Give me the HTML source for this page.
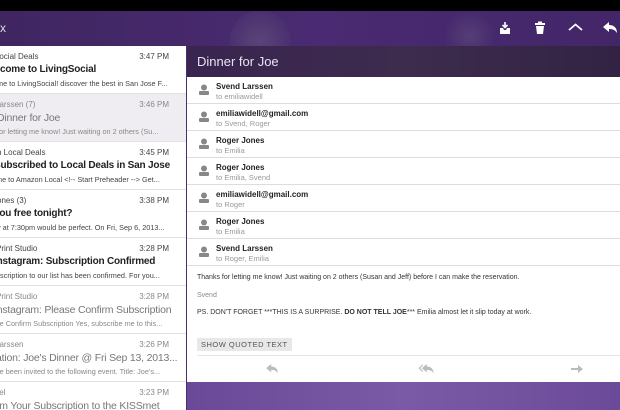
<!DOCTYPE html>
<html><head><style>
*{margin:0;padding:0;box-sizing:border-box}
body{width:620px;height:410px;overflow:hidden;font-family:"Liberation Sans",sans-serif;background:#4a2d6e;position:relative}
.top{position:absolute;left:0;top:0;width:620px;height:11px;background:#000}
.hdr{position:absolute;left:0;top:11px;width:620px;height:35px;background:radial-gradient(circle at 260px 30px,#5a4478 0,#4b3070 30px,transparent 31px),radial-gradient(circle at 470px 25px,#553f76 0,transparent 26px),linear-gradient(90deg,#3f2660,#4a2a72 50%,#432668)}
.hdr .x{position:absolute;left:0;top:10px;color:#ddd;font-size:12px}
.list{position:absolute;left:0;top:46px;width:186px;height:364px;background:#fff;overflow:hidden}
.row{position:absolute;left:0;width:186px;height:48px;border-bottom:1px solid #e2e2e2;white-space:nowrap;overflow:hidden}
.row.sel{background:#efedf2}
.row .s{position:absolute;top:6px;font-size:8px;color:#444}
.row .t{position:absolute;right:17px;top:6px;font-size:8px;color:#444}
.row .j{position:absolute;top:18px;font-size:10px;letter-spacing:-0.2px;font-weight:bold;color:#222}
.row .p{position:absolute;top:33px;font-size:7.3px;color:#444}
.row.sel .s,.row.sel .t,.row.sel .p,.row.g .s,.row.g .t,.row.g .p{color:#888}
.row.sel .j,.row.g .j{color:#777;font-weight:normal;font-size:10.5px}
.right{position:absolute;left:187px;top:46px;width:433px;height:336px;background:#fff}
.title{position:absolute;left:0;top:0;width:433px;height:31px;background:linear-gradient(90deg,#3a2450,#3d2c4e 50%,#322244);color:#e8e4ee;font-size:13px;padding:8px 0 0 10px}
.rc{position:absolute;left:0;width:433px;height:27px;border-bottom:1px solid #ddd}
.rc .ic{position:absolute;left:12px;top:7px;width:10px;height:11px}
.rc .n{position:absolute;left:29px;top:5px;font-size:8px;font-weight:bold;color:#222}
.rc .to{position:absolute;left:29px;top:15px;font-size:7.5px;color:#999}
.body{position:absolute;left:10px;font-size:7px;color:#333;white-space:nowrap}
.btn{position:absolute;left:10px;top:292px;background:#e8e8e8;color:#555;font-size:7.5px;padding:2px 4px;letter-spacing:.5px}
.foot{position:absolute;left:187px;top:382px;width:433px;height:28px;background:linear-gradient(90deg,#6a4a98,#7a5aa6 50%,#6c4a9a)}
</style></head><body>
<div class="top"></div>
<div class="hdr"><span class="x">x</span>
<svg style="position:absolute;left:499px;top:10px" width="12" height="14" viewBox="0 0 12 14"><path d="M6 1v5M3.5 4L6 6.5 8.5 4" stroke="#fff" stroke-width="1.6" fill="none"/><path d="M1 7h3l1 2h2l1-2h3v6H1z" fill="#fff"/></svg>
<svg style="position:absolute;left:535px;top:10px" width="10" height="14" viewBox="0 0 10 14"><rect x="0" y="2" width="10" height="2" fill="#fff"/><rect x="3" y="0.5" width="4" height="2" fill="#fff"/><path d="M1 5h8l-1 8H2z" fill="#fff"/></svg>
<svg style="position:absolute;left:568px;top:12px" width="15" height="8" viewBox="0 0 15 8"><path d="M1 7L7.5 1.5 14 7" stroke="#fff" stroke-width="1.8" fill="none"/></svg>
<svg style="position:absolute;left:603px;top:11px" width="14" height="12" viewBox="0 0 14 12"><path d="M0 5L6 0v3c5 0 8 3 8 8-2-3-4-4-8-4v3z" fill="#fff"/></svg>
</div>
<div class="list">
<div class="row" style="top:0"><span class="s" style="left:-6px">Social Deals</span><span class="t">3:47 PM</span><span class="j" style="left:-17px">Welcome to LivingSocial</span><span class="p" style="left:-3px">me to LivingSocial! discover the best in San Jose F...</span></div>
<div class="row sel" style="top:48px"><span class="s" style="left:-5px">Larssen (7)</span><span class="t">3:46 PM</span><span class="j" style="left:-3px">Dinner for Joe</span><span class="p" style="left:-3px">for letting me know! Just waiting on 2 others (Su...</span></div>
<div class="row" style="top:96px"><span class="s" style="left:-3px">n Local Deals</span><span class="t">3:45 PM</span><span class="j" style="left:-6px">Subscribed to Local Deals in San Jose</span><span class="p" style="left:-4px">me to Amazon Local &lt;!-- Start Preheader --&gt; Get...</span></div>
<div class="row" style="top:144px"><span class="s" style="left:-3px">ones (3)</span><span class="t">3:38 PM</span><span class="j" style="left:-6px">you free tonight?</span><span class="p" style="left:-3px">y at 7:30pm would be perfect. On Fri, Sep 6, 2013...</span></div>
<div class="row" style="top:192px"><span class="s" style="left:-4px">Print Studio</span><span class="t">3:28 PM</span><span class="j" style="left:-6px">Instagram: Subscription Confirmed</span><span class="p" style="left:-4px">bscription to our list has been confirmed. For you...</span></div>
<div class="row g" style="top:240px"><span class="s" style="left:-4px">Print Studio</span><span class="t">3:28 PM</span><span class="j" style="left:-6px">Instagram: Please Confirm Subscription</span><span class="p" style="left:-4px">se Confirm Subscription Yes, subscribe me to this...</span></div>
<div class="row g" style="top:288px"><span class="s" style="left:-5px">Larssen</span><span class="t">3:26 PM</span><span class="j" style="left:-4px">ation: Joe's Dinner @ Fri Sep 13, 2013...</span><span class="p" style="left:-4px">ve been invited to the following event. Title: Joe's...</span></div>
<div class="row g" style="top:336px"><span class="s" style="left:-3px">tel</span><span class="t">3:23 PM</span><span class="j" style="left:-4px">rm Your Subscription to the KISSmet</span></div>
</div>
<div class="right">
<div class="title">Dinner for Joe</div>
<div class="rc" style="top:31px"><svg class="ic" viewBox="0 0 10 11"><circle cx="5" cy="3.5" r="3" fill="#888"/><rect x="0" y="7" width="10" height="4" rx="1" fill="#888"/></svg><span class="n">Svend Larssen</span><span class="to">to emiliawidell</span></div>
<div class="rc" style="top:58px"><svg class="ic" viewBox="0 0 10 11"><circle cx="5" cy="3.5" r="3" fill="#888"/><rect x="0" y="7" width="10" height="4" rx="1" fill="#888"/></svg><span class="n">emiliawidell@gmail.com</span><span class="to">to Svend, Roger</span></div>
<div class="rc" style="top:85px"><svg class="ic" viewBox="0 0 10 11"><circle cx="5" cy="3.5" r="3" fill="#888"/><rect x="0" y="7" width="10" height="4" rx="1" fill="#888"/></svg><span class="n">Roger Jones</span><span class="to">to Emilia</span></div>
<div class="rc" style="top:112px"><svg class="ic" viewBox="0 0 10 11"><circle cx="5" cy="3.5" r="3" fill="#888"/><rect x="0" y="7" width="10" height="4" rx="1" fill="#888"/></svg><span class="n">Roger Jones</span><span class="to">to Emilia, Svend</span></div>
<div class="rc" style="top:139px"><svg class="ic" viewBox="0 0 10 11"><circle cx="5" cy="3.5" r="3" fill="#888"/><rect x="0" y="7" width="10" height="4" rx="1" fill="#888"/></svg><span class="n">emiliawidell@gmail.com</span><span class="to">to Roger</span></div>
<div class="rc" style="top:166px"><svg class="ic" viewBox="0 0 10 11"><circle cx="5" cy="3.5" r="3" fill="#888"/><rect x="0" y="7" width="10" height="4" rx="1" fill="#888"/></svg><span class="n">Roger Jones</span><span class="to">to Emilia</span></div>
<div class="rc" style="top:193px"><svg class="ic" viewBox="0 0 10 11"><circle cx="5" cy="3.5" r="3" fill="#888"/><rect x="0" y="7" width="10" height="4" rx="1" fill="#888"/></svg><span class="n">Svend Larssen</span><span class="to">to Roger, Emilia</span></div>
<div class="body" style="top:228px">Thanks for letting me know! Just waiting on 2 others (Susan and Jeff) before I can make the reservation.</div>
<div class="body" style="top:246px;color:#888">Svend</div>
<div class="body" style="top:263px">PS. DON'T FORGET ***THIS IS A SURPRISE. <b>DO NOT TELL JOE</b>*** Emilia almost let it slip today at work.</div>
<div class="btn">SHOW QUOTED TEXT</div>
<div style="position:absolute;left:10px;top:309px;width:423px;border-top:1px solid #e4e4e4"></div>
<svg style="position:absolute;left:79px;top:318px" width="12" height="10" viewBox="0 0 14 12"><path d="M0 5L6 0v3c5 0 8 3 8 8-2-3-4-4-8-4v3z" fill="#bbb"/></svg>
<svg style="position:absolute;left:231px;top:318px" width="16" height="10" viewBox="0 0 18 12"><path d="M0 5L5 0v2L2 5l3 3v2z" fill="#bbb"/><path d="M4 5L10 0v3c5 0 8 3 8 8-2-3-4-4-8-4v3z" fill="#bbb"/></svg>
<svg style="position:absolute;left:384px;top:318px" width="12" height="10" viewBox="0 0 12 10"><path d="M0 4h7V1l5 4-5 4V6H0z" fill="#bbb"/></svg>
</div>
<div class="foot"></div>
</body></html>
